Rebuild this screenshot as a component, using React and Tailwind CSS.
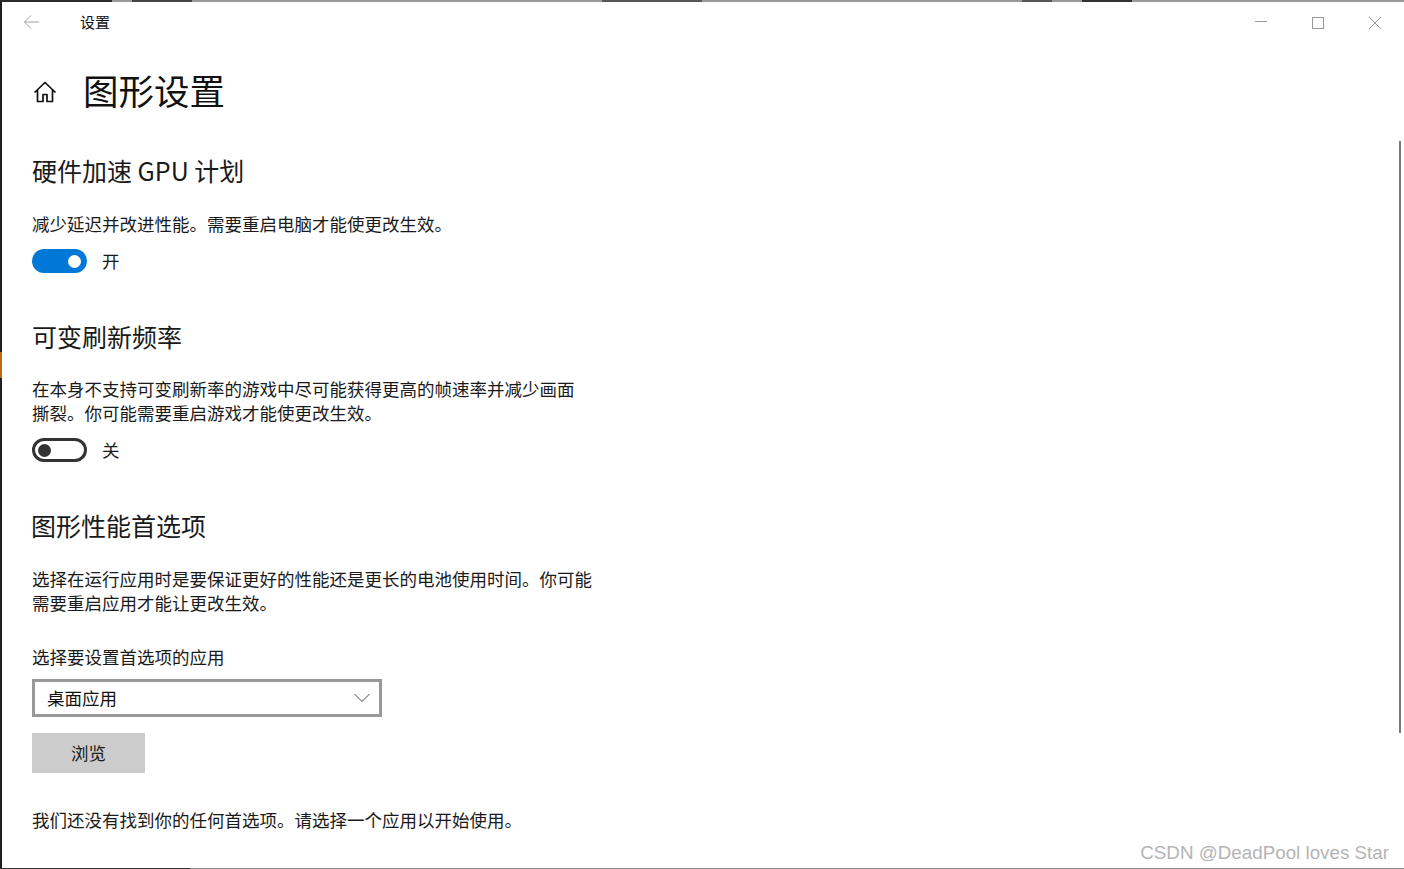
const font = { fontFamily: '"Noto Sans CJK SC", "Liberation Sans", sans-serif' }

function Heading({ children, className = '' }) {
  return <h2 className={`h-[34px] text-[25px] leading-[34px] text-[#1a1a1a] ${className}`}>{children}</h2>
}

function Body({ children, className = '' }) {
  return <p className={`w-[550px] text-[17.5px] leading-[24px] text-[#1a1a1a] ${className}`}>{children}</p>
}

function Toggle({ on, label, className = '' }) {
  return (
    <div className={`flex h-[24px] items-center ${className}`}>
      {on ? (
        <div className="flex h-[24px] w-[55px] items-center justify-end rounded-full bg-[#0078d7] pr-[6px]">
          <div className="h-[13px] w-[13px] rounded-full bg-white" />
        </div>
      ) : (
        <div className="flex h-[24px] w-[55px] items-center rounded-full border-[3px] border-[#333333] pl-[3px]">
          <div className="h-[13px] w-[13px] rounded-full bg-[#333333]" />
        </div>
      )}
      <span className="ml-[15px] text-[17.5px] leading-[24px] text-[#1a1a1a]">{label}</span>
    </div>
  )
}

export default function App() {
  return (
    <div style={font} className="relative flex h-[869px] w-[1404px] flex-col overflow-hidden bg-white">
      {/* bits of the desktop showing around the window */}
      <div className="flex h-[2px] w-full shrink-0 bg-[#9a9a9a]">
        <div className="h-full w-[112px] bg-[#2a2a2a]" />
        <div className="ml-[20px] h-full w-[60px] bg-[#444444]" />
        <div className="ml-[410px] h-full w-[100px] bg-[#555555]" />
        <div className="ml-[320px] h-full w-[30px] bg-[#555555]" />
        <div className="ml-[30px] h-full w-[50px] bg-[#333333]" />
      </div>

      <div className="flex min-h-0 flex-1">
        <div className="flex w-[2px] shrink-0 flex-col bg-[#1f1f1f]">
          <div className="mt-[350px] h-[26px] w-full bg-[#b86a10]" />
        </div>

        <main className="flex min-w-0 flex-1 flex-col">
          {/* title bar */}
          <div className="flex h-[40px] shrink-0 items-center">
            <svg className="ml-[21px] h-[16px] w-[17px]" viewBox="0 0 17 16" fill="none" stroke="#a3a3a3" strokeWidth="1">
              <path d="M16 8H1.5M8 1.5 1.5 8 8 14.5" />
            </svg>
            <span className="ml-[40px] text-[15px] leading-[20px] text-[#111111]">设置</span>
            <div className="ml-auto mt-[2px] flex items-center pr-[23px]">
              <svg className="h-[12px] w-[12px]" viewBox="0 0 12 12" fill="none" stroke="#999999" strokeWidth="1">
                <path d="M0 4.5H12" />
              </svg>
              <svg className="ml-[45px] h-[12px] w-[12px]" viewBox="0 0 12 12" fill="none" stroke="#999999" strokeWidth="1">
                <rect x="0.5" y="0.5" width="11" height="11" />
              </svg>
              <svg className="ml-[45px] h-[12px] w-[12px]" viewBox="0 0 12 12" fill="none" stroke="#999999" strokeWidth="1">
                <path d="M0 0 12 12M12 0 0 12" />
              </svg>
            </div>
          </div>

          {/* page title */}
          <div className="mt-[23px] flex h-[50px] items-center">
            <svg className="ml-[31px] mt-[4px] h-[24px] w-[24px]" viewBox="0 0 24 24" fill="none" stroke="#111111" strokeWidth="1.7" strokeLinejoin="round">
              <path d="M1.5 12.5 12 2.5l10.5 10M4.5 10v11.5h5.5v-7h4v7h5.5V10" />
            </svg>
            <h1 className="ml-[26px] text-[35.5px] leading-[50px] text-[#111111]">图形设置</h1>
          </div>

          <div className="flex flex-col pl-[30px]">
            <Heading className="mt-[38px]">硬件加速 GPU 计划</Heading>
            <Body className="mt-[25px]">减少延迟并改进性能。需要重启电脑才能使更改生效。</Body>
            <Toggle on label="开" className="mt-[13px]" />

            <Heading className="mt-[46px]">可变刷新频率</Heading>
            <Body className="mt-[24px]">在本身不支持可变刷新率的游戏中尽可能获得更高的帧速率并减少画面撕裂。你可能需要重启游戏才能使更改生效。</Body>
            <Toggle label="关" className="mt-[13px]" />

            <Heading className="mt-[46px] -ml-[1px]">图形性能首选项</Heading>
            <Body className="mt-[25px] w-[565px]">选择在运行应用时是要保证更好的性能还是更长的电池使用时间。你可能需要重启应用才能让更改生效。</Body>
            <p className="mt-[30px] text-[17.5px] leading-[24px] text-[#1a1a1a]">选择要设置首选项的应用</p>

            <div className="mt-[10px] flex h-[38px] w-[350px] items-center justify-between border-[3px] border-[#999999] pl-[12px] pr-[3px]">
              <span className="text-[17.5px] leading-[24px] text-[#111111]">桌面应用</span>
              <svg className="mr-[6px] h-[10px] w-[16px]" viewBox="0 0 16 10" fill="none" stroke="#444444" strokeWidth="1">
                <path d="M.5 1 8 8.5 15.5 1" />
              </svg>
            </div>

            <button className="mt-[16px] flex h-[40px] w-[113px] items-center justify-center bg-[#cccccc] text-[17.5px] text-[#1a1a1a]">浏览</button>

            <p className="mt-[35px] text-[17.5px] leading-[24px] text-[#1a1a1a]">我们还没有找到你的任何首选项。请选择一个应用以开始使用。</p>
          </div>
        </main>
      </div>

      <div className="flex h-[1px] w-full shrink-0 bg-[#8a8a8a]">
        <div className="h-full w-[190px] bg-[#333333]" />
      </div>

      {/* scrollbar thumb */}
      <div className="absolute left-[1399px] top-[141px] h-[592px] w-[2px] bg-[#7a7a7a]" />

      {/* watermark */}
      <span className="absolute right-[15px] top-[840px] text-[18.8px] leading-[26px] text-[#b4b4b4]" style={{ fontFamily: '"Liberation Sans", sans-serif' }}>CSDN @DeadPool loves Star</span>
    </div>
  )
}
